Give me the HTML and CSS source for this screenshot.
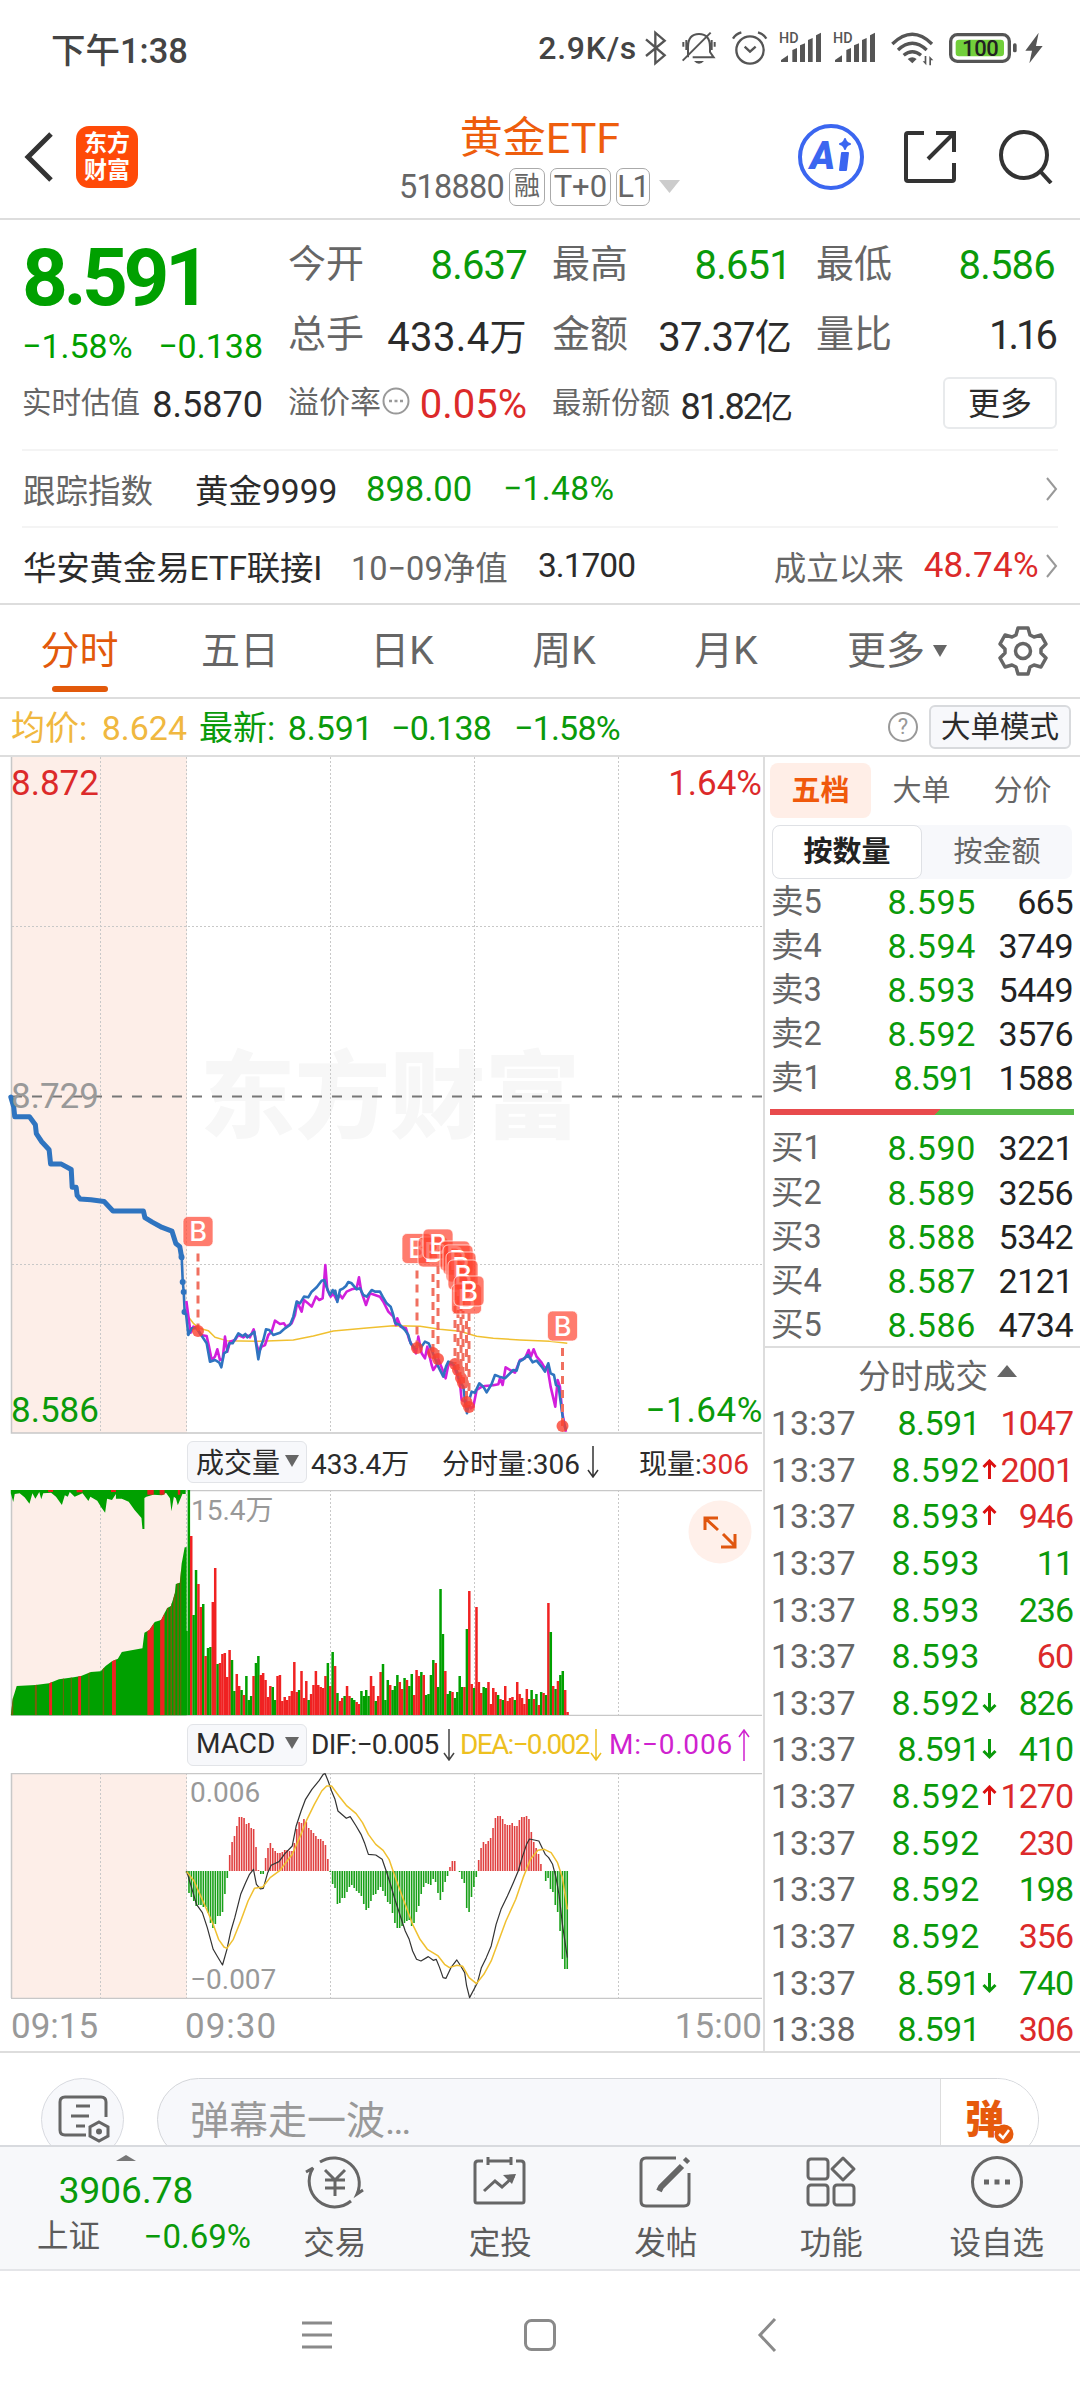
FILE: index.html
```html
<!DOCTYPE html>
<html lang="zh-CN">
<head>
	<meta charset="UTF-8" />
	<title>黄金ETF 518880</title>
	<link rel="stylesheet" href="styles.css">
</head>
<body>
	<!--status bar-->
	<div class="status">
		<span class="clock">下午1:38</span>
		<span class="speed">2.9K/s</span>
		<svg class="status-icons" width="414" height="54" viewBox="240 0 1242 162">
			<g fill="none" stroke="#555" stroke-width="7">
				<path d="M258 58L314 106L286 130V38L314 62L258 108" />
				<path d="M384 112V82C384 52 398 42 417 42S450 52 450 82V96L461 112H398M368 122L452 38M370 66V80M379 60V90M464 66V80M455 60V90" stroke-width="6" />
				<circle cx="570" cy="90" r="41" />
				<path d="M554 80L570 95L587 80M519 56Q527 42 544 37M619 56Q611 42 594 37" />
				<path d="M997 72Q1057 14 1116 72M1014 90Q1057 50 1100 90M1031 106Q1057 84 1083 106" stroke-width="10" />
				<rect x="1172" y="44" width="176" height="80" rx="20" stroke-width="10" />
			</g>
			<g fill="#555">
				<path d="M402 123H432Q417 140 402 123ZM1043 117Q1057 106 1070 117L1057 130ZM1436 38L1396 92H1416L1408 130L1448 78H1428Z" />
				<path d="M663 126V120L684 106V126ZM697 90L711 84V126H697ZM720 76L735 70V126H720ZM744 60L758 54V126H744ZM768 46L783 38V126H768Z" />
				<path d="M825 126V120L846 106V126ZM859 90L873 84V126H859ZM882 76L897 70V126H882ZM906 60L920 54V126H906ZM930 46L945 38V126H930Z" />
				<path d="M1099 108V136L1088 124H1094V108ZM1108 136V108L1120 121H1113V136Z" />
				<rect x="1359" y="70" width="11" height="27" rx="5" />
				<text x="657" y="68" class="hd">HD</text>
				<text x="819" y="68" class="hd">HD</text>
			</g>
			<rect x="1187" y="59" width="145" height="50" rx="10" fill="#72cf3b" />
			<text x="1206" y="109" class="battery">100</text>
		</svg>
	</div>

	<!--header-->
	<div class="header">
		<div class="side">
			<svg class="back" width="30" height="50" viewBox="0 0 30 50"><path d="M27 2L4 25L27 48" fill="none" stroke="#333" stroke-width="5" /></svg>
			<div class="logo">东方<br>财富</div>
		</div>
		<div class="title">
			<div class="name">黄金ETF</div>
			<div class="code">
				<span>518880</span><span class="tag cn">融</span><span class="tag">T+0</span><span class="tag l1">L1</span>
				<svg width="22" height="13"><path d="M0 0H21L10.500 13Z" fill="#ccc" /></svg>
			</div>
		</div>
		<div class="side right">
			<svg width="66" height="66" viewBox="0 0 66 66">
				<circle cx="33" cy="33" r="31" fill="none" stroke="#3b66f0" stroke-width="4" />
				<text x="12" y="45" class="ai">A</text>
				<path d="M44 29H50L48 46H42ZM47 15Q48 19 52 20Q48 21 47 25Q46 21 42 20Q46 19 47 15Z" fill="#3b66f0" stroke="#3b66f0" stroke-width="2" stroke-linejoin="round" />
			</svg>
			<svg class="share" width="52" height="52" viewBox="0 0 52 52"><path d="M20 2H4Q2 2 2 4V48Q2 50 4 50H48Q50 50 50 48V32M32 2H50V21M49 3L24 28" fill="none" stroke="#333" stroke-width="4" /></svg>
			<svg class="search" width="54" height="54" viewBox="0 0 54 54"><circle cx="25" cy="25" r="23" fill="none" stroke="#333" stroke-width="4" /><path d="M41 41L52 53" stroke="#333" stroke-width="4" /></svg>
		</div>
	</div>

	<!--quote-->
	<div class="quote">
		<div class="last">
			<div class="price">8.591</div>
			<div class="chg"><span>−1.58%</span><span>−0.138</span></div>
		</div>
		<div class="cell"><label>今开</label><b class="g">8.637</b></div>
		<div class="cell"><label>最高</label><b class="g">8.651</b></div>
		<div class="cell"><label>最低</label><b class="g">8.586</b></div>
		<div class="cell"><label>总手</label><b class="total">433.4<i>万</i></b></div>
		<div class="cell"><label>金额</label><b>37.37<i>亿</i></b></div>
		<div class="cell"><label>量比</label><b class="lb">1.16</b></div>
		<div class="cell small"><label>实时估值</label><b>8.5870</b></div>
		<div class="cell small"><label class="wide">溢价率</label>
			<svg class="dots" width="28" height="28" viewBox="0 0 28 28"><circle cx="14" cy="14" r="12.500" fill="none" stroke="#999" stroke-width="2" /><path d="M7 14h3M12.500 14h3M18 14h3" stroke="#999" stroke-width="2.500" /></svg>
			<b class="r big">0.05%</b></div>
		<div class="cell small"><label>最新份额</label><b class="units">81.82<i>亿</i></b></div>
		<div class="cell end"><span class="more">更多</span></div>
	</div>
	<div class="line-row">
		<span class="grey w172">跟踪指数</span>
		<span class="w171">黄金9999</span>
		<span class="g w139">898.00</span>
		<span class="g pc">−1.48%</span>
		<svg class="chev" width="12" height="24"><path d="M1 1L10 12L1 23" fill="none" stroke="#999" stroke-width="2" /></svg>
	</div>
	<div class="line-row">
		<span class="fund">华安黄金易ETF联接I</span>
		<span class="grey w187">10−09净值</span>
		<span class="nav">3.1700</span>
		<span class="grey since">成立以来</span>
		<span class="r rate">48.74%</span>
		<svg width="12" height="24"><path d="M1 1L10 12L1 23" fill="none" stroke="#999" stroke-width="2" /></svg>
	</div>

	<!--period tabs-->
	<div class="tabs">
		<span class="tab on">分时</span>
		<span class="tab">五日</span>
		<span class="tab">日K</span>
		<span class="tab">周K</span>
		<span class="tab">月K</span>
		<span class="tab wide">更多<svg width="14" height="12"><path d="M0 0H14L7 12Z" fill="#666" /></svg></span>
		<svg class="gear" width="50" height="50" viewBox="0 0 50 50">
			<path d="M20 2H30L32 9L36 11L43 9L48 18L43 23V27L48 32L43 41L36 39L32 41L30 48H20L18 41L14 39L7 41L2 32L7 27V23L2 18L7 9L14 11L18 9Z" fill="none" stroke="#666" stroke-width="3.500" stroke-linejoin="round" />
			<circle cx="25" cy="25" r="7.500" fill="none" stroke="#666" stroke-width="3.500" />
		</svg>
	</div>
	<div class="info">
		<span class="avg">均价: 8.624</span>
		<span class="g w193">最新: 8.591</span>
		<span class="g w123">−0.138</span>
		<span class="g w123">−1.58%</span>
		<span class="help">?</span>
		<span class="mode">大单模式</span>
	</div>

	<div class="main">
		<div class="charts">
			<!--price-->
			<svg width="763" height="677">
				<rect x="11" y="0" width="176" height="676" fill="#fdeee8" />
				<text x="200" y="374" class="mark">东方财富</text>
				<path class="grid" d="M100.500 0V676M186.500 0V676M330.500 0V676M474.500 0V676M618.500 0V676M12 169.500H762M12 507.500H762" />
				<path class="frame" d="M11.500 0V676H762" />
				<path d="M12 339.500H762" stroke="#777" stroke-width="2" stroke-dasharray="10 10" />
				<g transform="translate(0 -17) scale(.4912 .4464)">
					<polyline class="blue pre" points="22,800 28,822 30,844 60,844 72,862 74,882 85,900 100,918 103,950 125,950 145,962 147,1002 155,1002 157,1020 163,1028 185,1030 212,1034 230,1055 292,1055 295,1070 310,1080 330,1092 350,1100 358,1128 366,1135 370,1160" />
					<polyline class="blue" points="366,1135 370,1160 372,1213 374,1236 376,1282 380,1290" />
				</g>
				<path d="M182.700 525V525M183.700 535V535M184.500 555V555M181.500 500V500" stroke="#2f74c0" stroke-width="6" stroke-linecap="round" />
				<g transform="translate(160 443) scale(.3333)">
					<polyline class="yellow" points="85,350 100,370 118,385 145,392 165,412 200,422 300,424 400,420 460,408 520,393 620,384 700,377 780,379 840,388 900,394 950,409 1000,415 1080,420 1170,424 1222,430" />
					<polyline class="purple" points="79,303 88,370 92,398 100,380 112,385 122,405 140,408 147,440 155,480 165,470 172,448 180,480 188,478 195,410 202,455 210,425 225,420 235,405 250,412 260,405 270,412 281,388 290,435 297,455 305,440 315,435 325,405 335,395 345,362 360,372 372,370 378,380 395,370 405,345 412,305 418,320 425,335 432,300 442,308 455,320 468,290 478,300 488,295 492,250 496,195 502,270 512,290 520,280 530,300 540,285 547,295 560,275 575,268 590,265 597,232 604,275 618,315 630,280 645,285 660,290 670,305 685,335 700,350 708,375 712,355 722,380 738,385 748,420 758,440 768,460 775,410 785,460 795,475 802,440 815,495 820,510 830,495 835,478 848,510 857,535 866,490 880,495 890,520 900,550 905,600 915,605 922,600 932,625 940,620 950,570 962,562 975,558 1000,556 1015,553 1020,535 1028,555 1037,502 1050,510 1065,518 1080,480 1095,475 1106,450 1113,470 1121,448 1130,470 1145,488 1155,505 1162,500 1172,560 1186,620 1193,540 1200,560 1207,640 1218,695" />
					<polyline class="blue" points="78,340 85,405 95,385 110,385 120,400 140,430 150,485 165,480 178,488 184,502 192,460 200,455 208,430 218,430 235,400 248,408 256,402 262,412 272,404 283,395 288,430 295,478 302,440 310,420 318,388 328,390 340,405 360,398 375,385 390,375 400,350 410,305 420,310 432,290 445,292 455,275 470,262 485,242 493,240 500,262 510,285 518,270 524,282 526,272 532,306 540,270 550,265 558,258 565,246 575,250 590,268 600,265 610,285 620,290 635,270 645,275 660,275 668,290 680,310 692,320 700,345 706,370 720,375 735,390 745,405 752,430 765,445 775,432 785,440 795,425 806,430 815,450 825,475 835,500 850,530 858,500 865,485 880,490 890,510 900,545 910,560 915,600 921,640 928,600 935,575 945,578 958,550 970,560 980,577 995,552 1005,525 1018,530 1035,535 1045,525 1060,510 1070,512 1078,485 1090,478 1104,465 1118,487 1130,482 1145,500 1155,515 1165,490 1172,520 1182,525 1188,555 1196,560 1204,620 1210,665 1218,690" />
				</g>
				<g id="marks"></g>
				<text x="11" y="38" class="num fr">8.872</text>
				<text x="11" y="351" class="num fa">8.729</text>
				<text x="11" y="665" class="num fg">8.586</text>
				<text x="762" y="38" class="num fr" text-anchor="end">1.64%</text>
				<text x="763" y="665" class="num fg low" text-anchor="end">−1.64%</text>
			</svg>

			<!--volume-->
			<div class="sub-head">
				<span class="pick">成交量<svg width="14" height="12"><path d="M0 0H14L7 12Z" fill="#666" /></svg></span>
				<span class="w132">433.4万</span>
				<span>分时量:306</span>
				<svg class="arrow" width="12" height="32"><path d="M6 0V30M1 24L6 31L11 24" fill="none" stroke="#333" stroke-width="1.500" /></svg>
				<span class="push">现量:<em class="r">306</em></span>
			</div>
			<svg width="763" height="226">
				<rect x="11" y="0" width="176" height="226" fill="#fdeee8" />
				<path class="grid" d="M100.500 0V226M186.500 0V226M330.500 0V226M474.500 0V226M618.500 0V226" />
				<path class="frame" d="M11.500 225V.500H762M11 225.500H762" />
				<text x="191" y="30" class="sm fa">15.4万</text>
				<g transform="translate(0 -60) scale(.4912 .3333)">
					<clipPath id="pre"><path id="preShape" d="M22 856L26 806L34 768L72 765L100 760L120 748L150 742L165 738L185 726L205 724L215 708L228 694L240 686L248 666L290 655L294 608L304 600L315 576L328 570L340 535L348 528L356 490L358 462L366 458L370 400L376 352H380V856Z" /></clipPath>
					<use href="#preShape" fill="#00a000" />
					<g clip-path="url(#pre)">
						<path id="thin" fill="#7a5d0c" />
						<path id="stripes" fill="#ee2222" />
					</g>
					<path d="M22 180H378V192H372V190L362 226L358 205L354 200L349 244L346 205L338 188L330 196L312 194L298 200L294 204V297H290L288 264L274 240L262 215L248 206L236 206V192L228 210L218 206L214 248L206 232L198 212L184 200L180 213L168 190L152 200L142 186L138 200L132 196L126 225L114 200L104 188L88 190L84 208L80 186L72 206L66 190L60 221L50 202L40 190L30 192L27 216L22 190Z" fill="#00a000" />
					<path d="M98 180h10v6h-10zM156 180h12v7h-12zM226 180h10v6h-10zM300 180h13v14h-13zM325 180h10v14h-10zM362 180h5v14h-5z" fill="#e62020" />
				</g>
				<g id="volume"></g>
				<circle cx="720" cy="42" r="31.500" fill="#fff0ea" />
				<path d="M705 40V28H718M706 29L718 40M723 44L735 56M721 57H735V44" fill="none" stroke="#e0560f" stroke-width="3" />
			</svg>

			<!--macd-->
			<div class="sub-head macd">
				<span class="pick">MACD<svg width="14" height="12"><path d="M0 0H14L7 12Z" fill="#666" /></svg></span>
				<span class="dif-no">DIF:−0.005</span>
				<svg class="arrow" width="12" height="32"><path d="M6 0V30M1 24L6 31L11 24" fill="none" stroke="#444" stroke-width="1.500" /></svg>
				<span class="dea">DEA:−0.002</span>
				<svg class="arrow" width="12" height="32"><path d="M6 0V30M1 24L6 31L11 24" fill="none" stroke="#edc01f" stroke-width="1.500" /></svg>
				<span class="m">M:−0.006</span>
				<svg class="arrow" width="12" height="32"><path d="M6 32V2M1 8L6 1L11 8" fill="none" stroke="#cf22cf" stroke-width="1.500" /></svg>
			</div>
			<svg width="763" height="226">
				<rect x="11" y="0" width="176" height="226" fill="#fdeee8" />
				<path class="grid" d="M100.500 0V226M186.500 0V226M330.500 0V226M474.500 0V226M618.500 0V226" />
				<path class="frame" d="M11.500 225V.500H762M11 225.500H762" />
				<g id="macd"></g>
				<g transform="translate(0 -62) scale(.4912 .3333)">
					<polyline class="dif" points="380,480 390,530 400,580 412,605 422,650 434,715 442,735 453,762 462,715 470,660 478,620 490,550 500,515 508,490 516,475 522,520 530,534 536,532 545,485 552,463 568,452 580,428 595,405 603,345 613,300 622,265 635,235 650,208 658,190 662,188 668,210 675,240 682,265 688,300 705,322 713,317 725,345 735,370 742,395 750,430 765,432 778,445 785,475 795,520 805,570 815,615 825,660 833,685 840,720 848,745 857,750 872,737 882,748 888,745 895,770 902,800 908,802 918,770 930,747 938,765 946,785 950,825 956,860 965,835 972,815 980,770 990,740 1000,705 1010,640 1020,595 1033,555 1045,515 1055,480 1063,440 1072,400 1078,384 1097,390 1110,430 1117,440 1125,460 1132,500 1138,550 1145,640 1155,740" />
					<polyline class="yellow" points="380,482 395,510 410,560 422,600 434,640 445,685 456,708 462,712 475,685 490,630 505,570 518,532 535,528 550,500 570,478 595,430 610,380 625,325 640,280 655,240 665,225 675,225 690,255 705,283 725,308 738,335 750,370 765,400 780,418 792,445 805,500 820,560 840,640 855,685 870,715 892,735 905,760 915,770 930,763 942,766 955,800 970,818 985,790 1000,750 1015,690 1030,630 1050,565 1065,500 1080,445 1095,418 1108,415 1122,425 1135,455 1145,500 1155,595" />
				</g>
				<text x="190" y="29" class="sm fa">0.006</text>
				<text x="190" y="216" class="sm fa">−0.007</text>
			</svg>
			<div class="times"><span>09:15</span><span class="open">09:30</span><span class="push">15:00</span></div>
		</div>

		<div class="book">
			<div class="book-tabs"><span class="on">五档</span><span>大单</span><span>分价</span></div>
			<div class="seg"><span class="on">按数量</span><span>按金额</span></div>
			<div class="level"><span>卖5</span><span class="g">8.595</span><span class="v">665</span></div>
			<div class="level"><span>卖4</span><span class="g">8.594</span><span class="v">3749</span></div>
			<div class="level"><span>卖3</span><span class="g">8.593</span><span class="v">5449</span></div>
			<div class="level"><span>卖2</span><span class="g">8.592</span><span class="v">3576</span></div>
			<div class="level"><span>卖1</span><span class="g one">8.591</span><span class="v">1588</span></div>
			<div class="ratio"></div>
			<div class="level"><span>买1</span><span class="g">8.590</span><span class="v">3221</span></div>
			<div class="level"><span>买2</span><span class="g">8.589</span><span class="v">3256</span></div>
			<div class="level"><span>买3</span><span class="g">8.588</span><span class="v">5342</span></div>
			<div class="level"><span>买4</span><span class="g">8.587</span><span class="v">2121</span></div>
			<div class="level"><span>买5</span><span class="g">8.586</span><span class="v">4734</span></div>
			<div class="deals-head">分时成交<svg width="20" height="12"><path d="M0 12L10 0L20 12Z" fill="#666" /></svg></div>
			<div id="deals"></div>
		</div>
	</div>

	<!--comment box, cut off by the toolbar-->
	<div class="comment">
		<div class="round">
			<svg width="52" height="48" viewBox="0 0 52 48"><path d="M28 40H7Q2 40 2 35V7Q2 2 7 2H43Q48 2 48 7V22M18 11H32M13 21H31M18 31H27" fill="none" stroke="#666" stroke-width="3" /><path d="M41 27L50 32V41L41 46L32 41V32Z" fill="none" stroke="#666" stroke-width="3" /><circle cx="41" cy="36.500" r="3" fill="#666" /></svg>
		</div>
		<div class="pill">
			<span class="hint">弹幕走一波…</span>
			<span class="danmu">弹<svg width="20" height="20" viewBox="0 0 20 20"><circle cx="10" cy="10" r="9.500" fill="#e65a0c" /><path d="M5 10L9 14L15 6" fill="none" stroke="#fff" stroke-width="2.500" /></svg></span>
		</div>
	</div>

	<!--toolbar-->
	<div class="toolbar">
		<div class="index">
			<svg width="20" height="6"><path d="M0 6L10 0L20 6Z" fill="#777" /></svg>
			<div class="point">3906.78</div>
			<div class="pct"><span>上证</span><span class="g">−0.69%</span></div>
		</div>
		<div class="item">
			<svg width="60" height="54" viewBox="0 0 60 54"><path d="M15 7A25.500 25.500 0 0 1 52 39L58 35M46 46A25.500 25.500 0 0 1 8 13L1 17M20 15L30 25L40 15M30 25V41M20 25H40M20 33H40" /></svg>
			<span>交易</span>
		</div>
		<div class="item">
			<svg width="60" height="54" viewBox="0 0 60 54"><path d="M13 6H8Q5 6 5 9V46Q5 48 7 48H52Q54 48 54 46V9Q54 6 51 6H46M18 6H41M18 2V10M41 2V10M14 36L25 26L32 32L44 21" /><path d="M33 20L46 19L42 29Z" fill="#666" stroke="none" /></svg>
			<span>定投</span>
		</div>
		<div class="item">
			<svg width="60" height="54" viewBox="0 0 60 54"><path d="M40 3H10Q5 3 5 8V46Q5 51 10 51H48Q53 51 53 46V18" /><path d="M46 11L25 32L23 36" stroke-width="6" /><path d="M49 7L52 4" stroke-width="6" /></svg>
			<span>发帖</span>
		</div>
		<div class="item">
			<svg width="60" height="54" viewBox="0 0 60 54"><rect x="7" y="4" width="20" height="20" rx="3" /><rect x="7" y="30" width="20" height="20" rx="3" /><rect x="33" y="30" width="20" height="20" rx="3" /><path d="M42 3L53 14L42 25L31 14Z" stroke-linejoin="round" /></svg>
			<span>功能</span>
		</div>
		<div class="item">
			<svg width="60" height="54" viewBox="0 0 60 54"><circle cx="30" cy="27" r="24.500" /><path d="M17 27h5M27.500 27h5M38 27h5" stroke-width="5" /></svg>
			<span>设自选</span>
		</div>
	</div>

	<!--system keys-->
	<div class="keys">
		<svg width="1080" height="60"><g fill="none" stroke="#8a8a8a" stroke-width="3"><path d="M302 18H332M302 30H332M302 42H332M775 14L760 30L775 46" /><rect x="525.500" y="15.500" width="29" height="29" rx="6" /></g></svg>
	</div>

	<script src="script.js"></script>
</body>
</html>
```
FILE: styles.css
```css
body {
	margin: 0;
	width: 1080px;
	height: 2400px;
	overflow: hidden;
	background: #fff;
	color: #2b2b2b;
	font-family: Roboto, "Noto Sans CJK SC", sans-serif;
	font-size: 34px;
	display: flex;
	flex-direction: column;
}
body > div {
	flex: none;
	box-sizing: border-box;
}
svg {
	flex: none;
	display: block;
}
em, i {
	font-style: normal;
}
.g { color: #0a9a0a; }
.r { color: #dc2a2a; }
.grey { color: #666; }
.push { margin-left: auto; }

/* status bar */
.status {
	display: flex;
	align-items: center;
	height: 96px;
	padding: 0 26px 0 51px;
	color: #444;
	font-weight: 500;
}
.clock {
	font-size: 34.500px;
	margin-right: auto;
}
.speed {
	font-size: 32px;
	letter-spacing: .7px;
	margin-right: 3px;
}
.status-icons {
	margin-top: -2px;
}
.hd {
	font: 500 43px Roboto, sans-serif;
}
.battery {
	font: 500 66px Roboto, sans-serif;
	letter-spacing: -1px;
	fill: #222;
}

/* header */
.header {
	display: grid;
	grid-template-columns: 1fr auto 1fr;
	align-items: center;
	height: 124px;
	border-bottom: 2px solid #ddd;
}
.side {
	display: flex;
	align-items: center;
	padding-left: 24px;
}
.right {
	justify-content: flex-end;
	padding: 0 27px 0 0;
}
.logo {
	box-sizing: border-box;
	width: 62px;
	height: 62px;
	margin-left: 22px;
	padding-top: 4px;
	border-radius: 13px;
	background: #ff4a08;
	color: #fff;
	font-size: 23px;
	font-weight: 700;
	line-height: 27px;
	text-align: center;
}
.share { margin-left: 40px; }
.search { margin-left: 43px; }
.ai {
	font: italic 900 38px Roboto, sans-serif;
	fill: #3b66f0;
}
.title { padding-top: 5px; }
.name {
	color: #ee5d0d;
	font-size: 43px;
	line-height: 54px;
	text-align: center;
}
.code {
	display: flex;
	align-items: center;
	height: 44px;
	color: #666;
	font-size: 32.500px;
}
.code svg { margin-left: 9px; }
.tag {
	box-sizing: border-box;
	width: 61px;
	height: 38px;
	margin-left: 5px;
	border: 1.500px solid #aaa;
	border-radius: 7px;
	font-size: 31px;
	line-height: 36px;
	text-align: center;
}
.tag.cn {
	width: 36px;
	font-size: 26px;
	line-height: 34px;
}
.tag.l1 { width: 34px; letter-spacing: -1.500px; }
.code span:first-child { letter-spacing: -.8px; }

/* quote */
.quote {
	display: grid;
	grid-template-columns: 241px 239px 239px 239px;
	grid-template-rows: 69px 70px 69px;
	column-gap: 25px;
	height: 229px;
	padding: 11px 23px 0 22px;
}
.last {
	grid-row: 1 / 3;
	color: #00a000;
}
.price {
	font-size: 80px;
	font-weight: 700;
	letter-spacing: -4.500px;
	line-height: 94px;
}
.chg {
	display: flex;
	justify-content: space-between;
	line-height: 42px;
}
.cell {
	display: flex;
	align-items: center;
	white-space: nowrap;
}
.cell label {
	color: #666;
	font-size: 38px;
	line-height: 54px;
	margin-top: -3px;
}
.cell b {
	margin-left: auto;
	font-size: 40px;
	font-weight: 400;
	letter-spacing: -.8px;
}
.cell b i { font-size: 37px; }
.cell b.total { letter-spacing: .4px; }
.cell b.lb { letter-spacing: -3px; }
.small label { font-size: 29.500px; }
.small label.wide { font-size: 31px; }
.small b { font-size: 36px; letter-spacing: 0; }
.small b i { font-size: 32px; }
.cell b.units { letter-spacing: -2px; }
.small b.big { font-size: 40px; }
.dots { margin: -8px 0 0 1px; }
.quote > :nth-child(8) { grid-column: 1; }
.end {
	justify-content: flex-end;
	margin-right: -2px;
}
.more {
	box-sizing: border-box;
	width: 114px;
	height: 52px;
	margin-top: -4px;
	border: 2px solid #e8eaec;
	border-radius: 6px;
	font-size: 32px;
	line-height: 50px;
	text-align: center;
}
.line-row {
	display: flex;
	align-items: center;
	height: 77px;
	margin: 0 22px;
	padding-left: 1px;
	border-top: 2px solid #f4f4f4;
	font-size: 33.500px;
	white-space: nowrap;
}
.line-row .grey { font-size: 32.500px; }
.chev { margin-left: auto; }
.w172 { width: 172px; }
.w171 { width: 171px; }
.w139 {
	width: 137px;
	font-size: 34.500px;
}
.pc { letter-spacing: .4px; }
.w187 { width: 187px; }
.nav { letter-spacing: -1px; }
.fund {
	width: 328px;
	letter-spacing: -.2px;
}
.since { margin-left: auto; }
.rate {
	margin: 0 7px 0 20px;
	font-size: 35px;
	letter-spacing: .3px;
}

/* period tabs */
.tabs {
	display: flex;
	align-items: center;
	height: 96px;
	border-top: 2px solid #ddd;
	border-bottom: 2px solid #ddd;
	color: #666;
	font-size: 39px;
}
.tab {
	display: flex;
	align-items: center;
	justify-content: center;
	width: 162px;
	height: 92px;
	line-height: 94px;
}
.tab.on {
	position: relative;
	width: 159px;
	color: #e2590b;
}
.tab.on::after {
	content: "";
	position: absolute;
	left: 52px;
	bottom: 5px;
	width: 56px;
	height: 6px;
	border-radius: 3px;
	background: #e2590b;
}
.tab.wide {
	width: 180px;
}
.tab.wide svg { margin-left: 8px; }
.gear { margin-left: 11px; }

/* info line above the chart */
.info {
	display: flex;
	align-items: center;
	height: 58px;
	padding: 0 9px 0 11px;
	border-bottom: 2px solid #ddd;
	line-height: 44px;
	white-space: nowrap;
}
.info > .g, .info > .avg { padding-top: 2px; }
.avg {
	width: 188px;
	color: #f0b840;
	word-spacing: 6px;
}
.w193 { width: 192px; word-spacing: 4px; }
.w123 { width: 123px; letter-spacing: -.8px; }
.info span.help {
	box-sizing: border-box;
	width: 30px;
	height: 30px;
	margin-left: auto;
	border: 2px solid #999;
	border-radius: 50%;
	color: #999;
	font-size: 22px;
	line-height: 26px;
	text-align: center;
}
.mode {
	box-sizing: border-box;
	width: 142px;
	height: 44px;
	margin-left: 11px;
	border: 2px solid #d8dadd;
	border-radius: 6px;
	background: #f7f8fb;
	font-size: 29.500px;
	line-height: 41px;
	text-align: center;
}

/* charts */
.main {
	display: flex;
	height: 1296px;
	border-bottom: 2px solid #ddd;
}
.charts { width: 763px; }
.grid {
	fill: none;
	stroke: #c8c8c8;
	stroke-dasharray: 2 2;
}
.frame {
	fill: none;
	stroke: #c8c8c8;
	stroke-width: 1.500;
}
.mark {
	font: 900 95px "Noto Sans CJK SC", sans-serif;
	fill: #f7f7f7;
}
polyline {
	fill: none;
	stroke-linejoin: round;
	vector-effect: non-scaling-stroke;
}
.blue {
	stroke: #2f74c0;
	stroke-width: 2.600px;
}
.pre {
	stroke-width: 5px;
	stroke-linecap: round;
}
.purple {
	stroke: #d21fdc;
	stroke-width: 2.600px;
}
.yellow {
	stroke: #f0c030;
	stroke-width: 1.500px;
}
.dif {
	stroke: #333;
	stroke-width: 1.200px;
}
.num { font-size: 35px; }
.low { letter-spacing: .6px; }
.sm { font-size: 28px; }
.fr { fill: #dc2a2a; }
.fg { fill: #0a9a0a; }
.fa { fill: #999; }
.buy {
	fill: #fff;
	font: 500 27px Inter, sans-serif;
	text-anchor: middle;
}
.sub-head {
	box-sizing: border-box;
	display: flex;
	align-items: center;
	height: 56px;
	padding: 0 14px 0 187px;
	font-size: 28px;
	white-space: nowrap;
}
.sub-head.macd { height: 57px; padding-right: 0; }
.pick {
	box-sizing: border-box;
	display: flex;
	flex: none;
	align-items: center;
	justify-content: space-between;
	width: 120px;
	height: 42px;
	margin-right: 4px;
	padding: 0 7px 3px 8px;
	border: 1.500px solid #e2e4e8;
	border-radius: 6px;
	background: #f7f8fb;
}
.w132 { width: 131px; }
.arrow { margin-left: 7px; }
.macd .arrow { margin: 0 5px; }
.dif-no {
	width: 127px;
	letter-spacing: -.7px;
}
.dea {
	width: 125px;
	color: #edc01f;
	letter-spacing: -1.700px;
}
.m {
	margin-left: 2px;
	color: #cf22cf;
	letter-spacing: .8px;
}
.times {
	display: flex;
	height: 55px;
	padding: 0 1px 0 11px;
	color: #999;
	font-size: 35px;
	line-height: 55px;
}
.times span:first-child { width: 174px; }
.open { letter-spacing: 1px; }

/* order book */
.book {
	box-sizing: border-box;
	width: 317px;
	padding-top: 6px;
	border-left: 2px solid #ddd;
	color: #666;
}
.book-tabs {
	display: flex;
	margin-left: 5px;
	font-size: 29px;
}
.book-tabs span {
	width: 101px;
	height: 55px;
	border-radius: 8px;
	line-height: 56px;
	text-align: center;
}
.book-tabs .on {
	background: #ffeee7;
	color: #f0590c;
	font-weight: 700;
}
.seg {
	display: flex;
	width: 300px;
	height: 54px;
	margin: 7px 0 1px 7px;
	border-radius: 8px;
	background: #f7f8fb;
	font-size: 29px;
	line-height: 54px;
	text-align: center;
}
.seg span {
	box-sizing: border-box;
	width: 150px;
}
.seg .on {
	border: 1.500px solid #dfe1e5;
	border-radius: 8px;
	background: #fff;
	color: #222;
	font-weight: 700;
	line-height: 52px;
}
.level, .deal {
	display: grid;
	grid-template-columns: 90px 115px 97px;
	margin-left: 6px;
	height: 44.100px;
	line-height: 45px;
	text-align: right;
}
.level span:first-child, .deal span:first-child {
	text-align: left;
}
.level .g, .deal .p { letter-spacing: .6px; }
.level .one, .deal .one { letter-spacing: -.6px; }
.level span:first-child { font-size: 32.500px; }
.level .v { color: #222; letter-spacing: -.5px; }
.ratio {
	width: 304px;
	height: 6px;
	margin: 9px 0 11px 5px;
	background: linear-gradient(130deg, #e84a4c 55%, #56b947 55%);
}
.deals-head {
	display: flex;
	align-items: center;
	justify-content: center;
	height: 52px;
	margin-top: -1px;
	padding-left: 30px;
	border-top: 2px solid #ddd;
	font-size: 32.500px;
}
.deals-head svg { margin: -6px 0 0 9px; }
.deal {
	grid-template-columns: 80px 129px 16px 77px;
	height: 46.650px;
	line-height: 46px;
}
.deal svg { margin: 12px 0 0 2px; }
.deal span:last-child { letter-spacing: -1px; }

/* comment box */
.comment {
	display: flex;
	height: 92px;
	overflow: hidden;
	padding: 25px 0 0 41px;
}
.round {
	box-sizing: border-box;
	display: flex;
	align-items: center;
	justify-content: center;
	width: 83px;
	height: 83px;
	border: 1.500px solid #d8dae0;
	border-radius: 50%;
	background: #f7f8fb;
}
.round svg { margin: -2px 0 0 2px; }
.pill {
	box-sizing: border-box;
	display: flex;
	width: 882px;
	height: 83px;
	margin-left: 33px;
	overflow: hidden;
	border: 1.500px solid #d4d6da;
	border-radius: 42px;
	background: #f7f8fb;
	line-height: 84px;
}
.hint {
	width: 750px;
	padding-left: 32px;
	color: #999;
	font-size: 39px;
}
.danmu {
	display: flex;
	align-items: center;
	flex: 1;
	padding-left: 24px;
	border-left: 1.500px solid #ddd;
	background: #fff;
	color: #e65a0c;
	font-size: 39px;
	font-weight: 900;
}
.danmu svg { margin: 28px 0 0 -10px; }

/* toolbar */
.toolbar {
	display: flex;
	height: 126px;
	border-top: 2px solid #d8dade;
	border-bottom: 2px solid #e4e5e8;
	background: #f7f8fa;
	color: #5c5c5c;
	font-size: 31.500px;
}
.index {
	display: flex;
	flex-direction: column;
	align-items: center;
	width: 252px;
	padding-top: 8px;
}
.point {
	margin-top: 1px;
	color: #0a9a0a;
	font-size: 37px;
	line-height: 58px;
}
.pct {
	display: flex;
	width: 214px;
	justify-content: space-between;
	margin-left: 36px;
	line-height: 34px;
}
.pct .g { font-size: 33px; }
.item {
	display: flex;
	flex-direction: column;
	align-items: center;
	width: 165.500px;
	padding-top: 8px;
	line-height: 70px;
}
.item svg {
	fill: none;
	stroke: #666;
	stroke-width: 3;
}

.keys { padding-top: 34px; }
```
FILE: script.js
```js
var NS = 'http://www.w3.org/2000/svg';

//small helper, appends an svg node
function add(parent, tag, attrs, text){
	var n = document.createElementNS(NS, tag);
	for(var k in attrs) n.setAttribute(k, attrs[k]);
	if(text) n.textContent = text;
	parent.appendChild(n);
	return n;
}
function doc(x){
	return document.getElementById(x);
}

//one bar per minute, negative = green
var volume = [-84,-225,179,-100,-145,131,108,-111,59,-67,-68,113,147,-51,52,61,62,38,65,-55,
	-24,41,29,-25,20,-39,-15,-19,39,-52,-59,40,42,35,18,29,-28,-15,39,40,
	14,18,15,19,24,53,23,-25,44,17,34,-15,21,30,44,30,28,27,39,-52,
	29,-63,49,-22,14,17,-19,29,19,-17,-15,13,11,-24,-19,-25,-19,39,29,-14,
	19,43,-51,-15,-35,30,-25,-29,-40,33,26,-37,35,-29,-41,20,45,39,-43,40,
	-20,-21,-40,-55,52,-28,-126,-81,44,-21,-24,23,-17,-23,-39,-28,28,-86,124,31,
	-27,108,33,22,-28,-27,33,11,27,23,-20,16,-15,29,14,17,18,-15,33,21,
	17,11,26,-16,-25,16,-21,10,-23,22,-20,112,-83,29,-26,34,-40,-44,25,3];

var macd = [-2,-22,-26,-30,-35,-34,-34,-36,-36,-42,-52,-57,-53,-45,-45,-41,-23,-7,16,29,
	35,45,54,54,53,47,48,43,42,24,1,-3,-3,13,23,28,23,20,18,18,
	19,21,21,20,20,28,42,49,48,52,49,43,41,38,35,32,32,30,26,12,
	-1,-13,-17,-33,-32,-27,-27,-21,-16,-14,-17,-20,-22,-25,-33,-39,-37,-30,-24,-23,
	-19,-16,-20,-25,-31,-33,-42,-52,-57,-57,-55,-52,-50,-49,-55,-52,-41,-35,-23,-16,
	-12,-13,-14,-8,-11,-22,-29,-21,-11,-5,4,10,10,0,-1,-8,-12,-37,-41,-26,
	-16,-6,11,23,29,27,30,33,43,53,55,55,52,47,46,46,48,45,45,51,
	54,54,55,52,39,29,23,17,7,0,-10,-7,-18,-21,-34,-41,-60,-88,-98,-98];

for(var i=0; i<volume.length; i++){
	var h = Math.abs(volume[i]);
	add(doc('volume'), 'rect', {
		x: 185.2 + i*2.397, y: 225 - h, width: 2.5, height: h,
		fill: volume[i] < 0 ? '#00a000' : '#f02222'
	});
}
for(i=0; i<macd.length; i++){
	h = Math.abs(macd[i]);
	add(doc('macd'), 'rect', {
		x: 185.8 + i*2.394, y: macd[i] < 0 ? 98 : 98 - h, width: 1.6, height: h,
		fill: macd[i] < 0 ? '#18a018' : '#e04040'
	});
}

//red columns in the call auction part
function columns(s){
	return s.map(function(a){
		return 'M' + a[0] + ' 300h' + a[1] + 'V856h-' + a[1] + 'Z';
	}).join('');
}
doc('stripes').setAttribute('d', columns([[100,6],[159,6],[228,8],[300,13],[326,9]]));
doc('thin').setAttribute('d', columns([[23,4],[71,4],[128,2],[144,2],[180,2],[209,3],[340,3],[347,3],[353,4],[361,3],[367,2]]));

//buy marks: x, box centre, dot
var marks = [[198,474.5,574],[417,491.5,591],[433,495,596],[438,487,602],[455,499,607],[458,503,613],
	[461,510,621],[463,518,626],[466.5,542,645],[469,534,650],[562.5,569,669]];
marks.forEach(function(m){
	var g = doc('marks');
	add(g, 'path', {d: 'M' + m[0] + ' ' + (m[1]+22) + 'V' + m[2], stroke: '#f07060', 'stroke-width': 3, 'stroke-dasharray': '8 6'});
	add(g, 'circle', {cx: m[0], cy: m[2], r: 6, fill: '#fa4030', 'fill-opacity': .8});
	add(g, 'rect', {x: m[0]-15, y: m[1]-15, width: 30, height: 30, rx: 5, fill: '#ff4530', 'fill-opacity': .7, stroke: '#fff', 'stroke-width': .7});
	add(g, 'text', {x: m[0], y: m[1]+9.5, 'class': 'buy'}, 'B');
});

//last trades: price, direction, amount, colour
var deals = [
	['8.591', '', 1047, 'r'], ['8.592', 'u', 2001, 'r'], ['8.593', 'u', 946, 'r'], ['8.593', '', 11, 'g'],
	['8.593', '', 236, 'g'], ['8.593', '', 60, 'r'], ['8.592', 'd', 826, 'g'], ['8.591', 'd', 410, 'g'],
	['8.592', 'u', 1270, 'r'], ['8.592', '', 230, 'r'], ['8.592', '', 198, 'g'], ['8.592', '', 356, 'r'],
	['8.591', 'd', 740, 'g'], ['8.591', '', 306, 'r']
];
var arrows = {
	'u': '<path d="M7.500 20V2M1.500 8L7.500 2L13.500 8" fill="none" stroke="#dc1010" stroke-width="3" />',
	'd': '<path d="M7.500 1V19M1.500 13L7.500 19L13.500 13" fill="none" stroke="#0a9a0a" stroke-width="3" />',
	'': ''
};
doc('deals').innerHTML = deals.map(function(d, n){
	return '<div class="deal"><span>13:3' + (n == 13 ? 8 : 7) + '</span><span class="g p' + (d[0] == '8.591' ? ' one' : '') + '">' + d[0] + '</span>' +
		'<svg width="15" height="22">' + arrows[d[1]] + '</svg><span class="' + d[3] + '">' + d[2] + '</span></div>';
}).join('');
```
